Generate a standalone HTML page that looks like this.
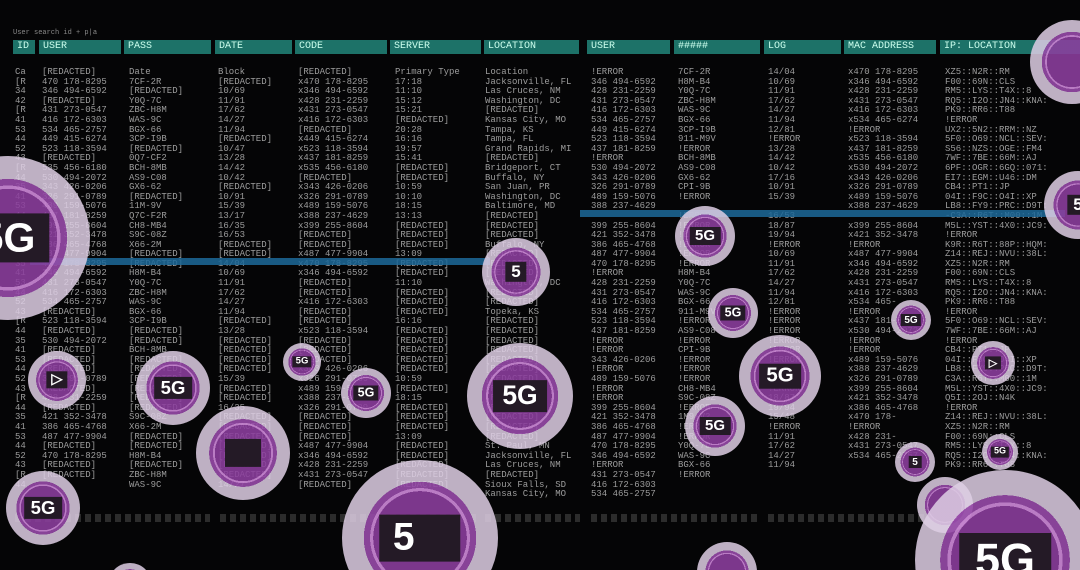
<!DOCTYPE html>
<html><head><meta charset="utf-8"><style>
html,body{margin:0;padding:0;background:#050506;width:1080px;height:570px;overflow:hidden;position:relative}
.t{position:absolute;font:9px/9.6px "Liberation Mono",monospace;color:#9c9c9c;margin:0;white-space:pre}
.h{position:absolute;top:40px;height:14px;background:#1d7268;color:#cfe;font:10px/14px "Liberation Mono",monospace;padding-left:4px;box-sizing:border-box}
.hl{position:absolute;height:7px;background:#1d6a9a;opacity:.85}
.b{position:absolute;width:2em;height:2em;margin:-1em 0 0 -1em;border-radius:50%;
background:radial-gradient(circle closest-side,rgba(140,62,158,.88) 0 60%,rgba(196,130,206,.95) 60% 64%,rgba(150,74,168,.9) 64% 72%,rgba(222,206,228,.85) 72% 100%);}
.b span{position:absolute;left:50%;top:50%;transform:translate(-50%,-50%);background:#241a26;color:#fff;font:bold .5em/1.1 "Liberation Sans",sans-serif;padding:.05em .35em;white-space:nowrap}
.bars{position:absolute;top:514px;height:8px;background:repeating-linear-gradient(90deg,#2c2c2c 0 6px,transparent 6px 10px)}
</style></head><body>
<div class="t" style="left:13px;top:29px;font-size:7px;color:#888">User search id + p|a</div>
<div class="h" style="left:13px;width:22px">ID</div>
<div class="h" style="left:39px;width:82px">USER</div>
<div class="h" style="left:124px;width:87px">PASS</div>
<div class="h" style="left:215px;width:77px">DATE</div>
<div class="h" style="left:295px;width:92px">CODE</div>
<div class="h" style="left:390px;width:91px">SERVER</div>
<div class="h" style="left:484px;width:95px">LOCATION</div>
<div class="h" style="left:587px;width:83px">USER</div>
<div class="h" style="left:674px;width:86px">#####</div>
<div class="h" style="left:764px;width:77px">LOG</div>
<div class="h" style="left:844px;width:92px">MAC ADDRESS</div>
<div class="h" style="left:940px;width:140px">IP: LOCATION</div>

<pre class="t" style="left:15px;top:68px">Ca
[R
34
42
[R
41
53
44
52
43
[R
44
35
41
53
44
52
43
[R
44
35
41
53
44
52
43
[R
44
35
41
53
44
52
43
[R
44
35
41
53
44
52
43
[R
44</pre>
<pre class="t" style="left:42px;top:68px">[REDACTED]
470 178-8295
346 494-6592
[REDACTED]
431 273-0547
416 172-6303
534 465-2757
449 415-6274
523 118-3594
[REDACTED]
535 456-6180
530 494-2072
343 426-0206
326 291-0789
489 159-5076
437 181-8259
399 255-8604
421 352-3478
386 465-4768
487 477-9904
470 178-8295
346 494-6592
431 273-0547
416 172-6303
534 465-2757
[REDACTED]
523 118-3594
[REDACTED]
530 494-2072
[REDACTED]
[REDACTED]
[REDACTED]
326 291-0789
[REDACTED]
428 231-2259
[REDACTED]
421 352-3478
386 465-4768
487 477-9904
[REDACTED]
470 178-8295
[REDACTED]
[REDACTED]</pre>
<pre class="t" style="left:129px;top:68px">Date
7CF-2R
[REDACTED]
Y0Q-7C
ZBC-H8M
WAS-9C
BGX-66
3CP-I9B
[REDACTED]
0Q7-CF2
BCH-8MB
AS9-C08
GX6-62
[REDACTED]
11M-9V
Q7C-F2R
CH8-MB4
S9C-08Z
X66-2M
[REDACTED]
[REDACTED]
H8M-B4
Y0Q-7C
ZBC-H8M
WAS-9C
BGX-66
3CP-I9B
[REDACTED]
[REDACTED]
BCH-8MB
[REDACTED]
[REDACTED]
[REDACTED]
[REDACTED]
[REDACTED]
[REDACTED]
S9C-08Z
X66-2M
[REDACTED]
[REDACTED]
H8M-B4
[REDACTED]
ZBC-H8M
WAS-9C</pre>
<pre class="t" style="left:218px;top:68px">Block
[REDACTED]
10/69
11/91
17/62
14/27
11/94
[REDACTED]
10/47
13/28
14/42
10/42
[REDACTED]
10/91
15/39
13/17
16/35
16/53
[REDACTED]
[REDACTED]
14/04
10/69
11/91
17/62
14/27
11/94
[REDACTED]
13/28
[REDACTED]
[REDACTED]
[REDACTED]
[REDACTED]
15/39
[REDACTED]
[REDACTED]
16/35
[REDACTED]
[REDACTED]
[REDACTED]
[REDACTED]
[REDACTED]
[REDACTED]
[REDACTED]
14/27</pre>
<pre class="t" style="left:298px;top:68px">[REDACTED]
x470 178-8295
x346 494-6592
x428 231-2259
x431 273-0547
x416 172-6303
[REDACTED]
x449 415-6274
x523 118-3594
x437 181-8259
x535 456-6180
[REDACTED]
x343 426-0206
x326 291-0789
x489 159-5076
x388 237-4629
x399 255-8604
[REDACTED]
[REDACTED]
x487 477-9904
x470 178-8295
x346 494-6592
[REDACTED]
[REDACTED]
x416 172-6303
[REDACTED]
[REDACTED]
x523 118-3594
[REDACTED]
[REDACTED]
[REDACTED]
x343 426-0206
x326 291-0789
x489 159-5076
x388 237-4629
x326 291-0789
[REDACTED]
[REDACTED]
[REDACTED]
x487 477-9904
x346 494-6592
x428 231-2259
x431 273-0547
[REDACTED]</pre>
<pre class="t" style="left:395px;top:68px">Primary Type
17:18
11:10
15:12
15:21
[REDACTED]
20:28
16:16
19:57
15:41
[REDACTED]
[REDACTED]
10:59
10:10
18:15
13:13
[REDACTED]
[REDACTED]
[REDACTED]
13:09
[REDACTED]
[REDACTED]
11:10
[REDACTED]
[REDACTED]
[REDACTED]
16:16
[REDACTED]
[REDACTED]
[REDACTED]
[REDACTED]
[REDACTED]
10:59
[REDACTED]
18:15
[REDACTED]
[REDACTED]
[REDACTED]
13:09
[REDACTED]
[REDACTED]
[REDACTED]
[REDACTED]
[REDACTED]</pre>
<pre class="t" style="left:485px;top:68px">Location
Jacksonville, FL
Las Cruces, NM
Washington, DC
[REDACTED]
Kansas City, MO
Tampa, KS
Tampa, FL
Grand Rapids, MI
[REDACTED]
Bridgeport, CT
Buffalo, NY
San Juan, PR
Washington, DC
Baltimore, MD
[REDACTED]
[REDACTED]
[REDACTED]
Buffalo, NY
[REDACTED]
[REDACTED]
[REDACTED]
Washington, DC
[REDACTED]
[REDACTED]
Topeka, KS
[REDACTED]
[REDACTED]
[REDACTED]
[REDACTED]
[REDACTED]
[REDACTED]
[REDACTED]
[REDACTED]
[REDACTED]
[REDACTED]
[REDACTED]
[REDACTED]
[REDACTED]
St. Paul, MN
Jacksonville, FL
Las Cruces, NM
[REDACTED]
Sioux Falls, SD
Kansas City, MO</pre>
<pre class="t" style="left:591px;top:68px">!ERROR
346 494-6592
428 231-2259
431 273-0547
416 172-6303
534 465-2757
449 415-6274
523 118-3594
437 181-8259
!ERROR
530 494-2072
343 426-0206
326 291-0789
489 159-5076
388 237-4629

399 255-8604
421 352-3478
386 465-4768
487 477-9904
470 178-8295
!ERROR
428 231-2259
431 273-0547
416 172-6303
534 465-2757
523 118-3594
437 181-8259
!ERROR
!ERROR
343 426-0206
!ERROR
489 159-5076
!ERROR
!ERROR
399 255-8604
421 352-3478
386 465-4768
487 477-9904
470 178-8295
346 494-6592
!ERROR
431 273-0547
416 172-6303
534 465-2757</pre>
<pre class="t" style="left:678px;top:68px">7CF-2R
H8M-B4
Y0Q-7C
ZBC-H8M
WAS-9C
BGX-66
3CP-I9B
911-M9V
!ERROR
BCH-8MB
AS9-C08
GX6-62
CPI-9B
!ERROR

!ERROR
!ERROR
!ERROR
!ERROR
!ERROR
!ERROR
H8M-B4
Y0Q-7C
WAS-9C
BGX-66
911-M9V
!ERROR
AS9-C08
!ERROR
CPI-9B
!ERROR
!ERROR
!ERROR
CH8-MB4
S9C-08Z
!ERROR
1M9-V2
!ERROR
!ERROR
Y0Q-7C
WAS-9C
BGX-66
!ERROR</pre>
<pre class="t" style="left:768px;top:68px">14/04
10/69
11/91
17/62
14/27
11/94
12/81
!ERROR
13/28
14/42
10/42
17/16
10/91
15/39

16/53
18/87
19/94
!ERROR
10/69
11/91
17/62
14/27
11/94
12/81
!ERROR
!ERROR
!ERROR
!ERROR
!ERROR
!ERROR
!ERROR
!ERROR
!ERROR
18/87
19/94
15/48
!ERROR
11/91
17/62
14/27
11/94</pre>
<pre class="t" style="left:848px;top:68px">x470 178-8295
x346 494-6592
x428 231-2259
x431 273-0547
x416 172-6303
x534 465-6274
!ERROR
x523 118-3594
x437 181-8259
x535 456-6180
x530 494-2072
x343 426-0206
x326 291-0789
x489 159-5076
x388 237-4629

x399 255-8604
x421 352-3478
!ERROR
x487 477-9904
x346 494-6592
x428 231-2259
x431 273-0547
x416 172-6303
x534 465-
!ERROR
x437 181-8259
x530 494-2072
!ERROR
!ERROR
x489 159-5076
x388 237-4629
x326 291-0789
x399 255-8604
x421 352-3478
x386 465-4768
x470 178-
!ERROR
x428 231-
x431 273-0547
x534 465-2757</pre>
<pre class="t" style="left:945px;top:68px">XZ5::N2R::RM
F00::69N::CLS
RM5::LYS::T4X::8
RQ5::I2O::JN4::KNA:
PK9::RR6::T88
!ERROR
UX2::5N2::RRM::NZ
5F0::O69::NCL::SEV:
S56::NZS::OGE::FM4
7WF::7BE::66M::AJ
6PF::OGR::6GQ::071:
EI7::EGM::U46::DM
CB4::PT1::JP
04I::F9C::O4I::XP
LB8::FY9::PRC::D9T:
-C3A::R6T::M00::1M
M5L::YST::4X0::JC9:
!ERROR
K9R::R6T::88P::HQM:
Z14::REJ::NVU::38L:
XZ5::N2R::RM
F00::69N::CLS
RM5::LYS::T4X::8
RQ5::I2O::JN4::KNA:
PK9::RR6::T88
!ERROR
5F0::O69::NCL::SEV:
7WF::7BE::66M::AJ
!ERROR
CB4::PT1::JP
04I::F9C::O4I::XP
LB8::FY9::PRC::D9T:
C3A::R6T::M00::1M
M5L::YST::4X0::JC9:
Q5I::2OJ::N4K
!ERROR
Z14::REJ::NVU::38L:
XZ5::N2R::RM
F00::69N::CLS
RM5::LYS::T4X::8
RQ5::I2O::JN4::KNA:
PK9::RR6::T88</pre>

<div class="hl" style="left:30px;top:258px;width:460px"></div>
<div class="hl" style="left:580px;top:210px;width:485px"></div>
<div class="bars" style="left:15px;width:195px"></div>
<div class="bars" style="left:220px;width:260px"></div>
<div class="bars" style="left:485px;width:95px"></div>
<div class="bars" style="left:591px;width:170px"></div>
<div class="bars" style="left:768px;width:170px"></div>

<div class="b" style="left:1072px;top:62px;font-size:42px"></div>
<div class="b" style="left:8px;top:238px;font-size:82px"><span>5G</span></div>
<div class="b" style="left:1078px;top:205px;font-size:34px"><span>5</span></div>
<div class="b" style="left:705px;top:236px;font-size:30px"><span>5G</span></div>
<div class="b" style="left:516px;top:272px;font-size:34px"><span>5</span></div>
<div class="b" style="left:733px;top:313px;font-size:25px"><span>5G</span></div>
<div class="b" style="left:911px;top:320px;font-size:20px"><span>5G</span></div>
<div class="b" style="left:302px;top:362px;font-size:19px"><span>5G</span></div>
<div class="b" style="left:57px;top:380px;font-size:29px"><span>▷</span></div>
<div class="b" style="left:173px;top:388px;font-size:37px"><span>5G</span></div>
<div class="b" style="left:366px;top:393px;font-size:25px"><span>5G</span></div>
<div class="b" style="left:520px;top:396px;font-size:53px"><span>5G</span></div>
<div class="b" style="left:780px;top:376px;font-size:41px"><span>5G</span></div>
<div class="b" style="left:993px;top:363px;font-size:22px"><span>▷</span></div>
<div class="b" style="left:243px;top:453px;font-size:47px"><span>&nbsp;&nbsp;&nbsp;</span></div>
<div class="b" style="left:715px;top:426px;font-size:30px"><span>5G</span></div>
<div class="b" style="left:915px;top:462px;font-size:20px"><span>5</span></div>
<div class="b" style="left:1000px;top:452px;font-size:18px"><span>5G</span></div>
<div class="b" style="left:43px;top:508px;font-size:37px"><span>5G</span></div>
<div class="b" style="left:420px;top:538px;font-size:78px"><span>5&nbsp;&nbsp;&nbsp;</span></div>
<div class="b" style="left:945px;top:505px;font-size:28px"></div>
<div class="b" style="left:1005px;top:560px;font-size:90px"><span>5G</span></div>
<div class="b" style="left:727px;top:572px;font-size:30px"></div>
<div class="b" style="left:130px;top:585px;font-size:22px"></div>
</body></html>
